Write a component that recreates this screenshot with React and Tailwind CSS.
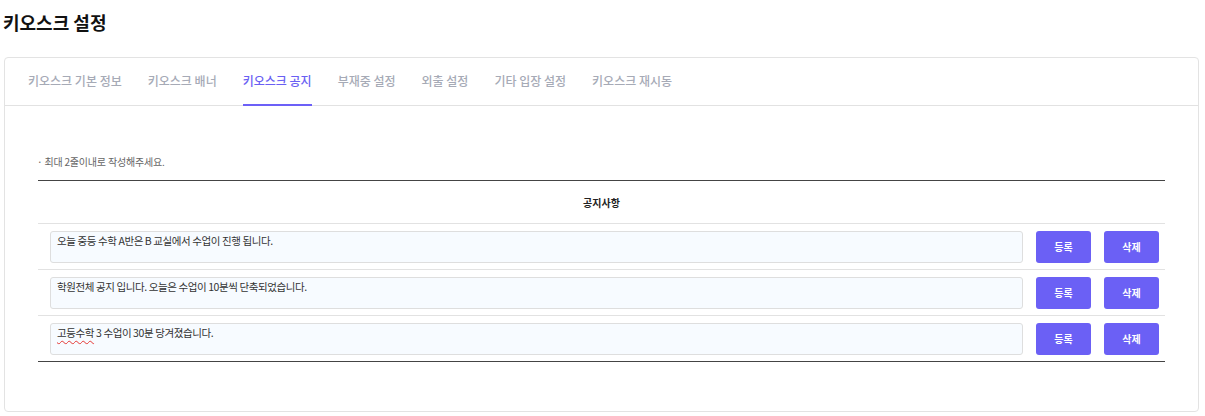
import React from "react";

const tabs = ["키오스크 기본 정보", "키오스크 배너", "키오스크 공지", "부재중 설정", "외출 설정", "기타 입장 설정", "키오스크 재시동"];

const notices = [
  { text: "오늘 중등 수학 A반은 B 교실에서 수업이 진행 됩니다." },
  { text: "학원전체 공지 입니다. 오늘은 수업이 10분씩 단축되었습니다." },
  { text: null },
];

export default function App() {
  return (
    <div className="w-[1205px] h-[416px] bg-white text-[#222]" style={{ fontFamily: '"Noto Sans CJK KR", "Noto Sans", sans-serif' }}>
      <h1 className="pl-[3px] pt-[9px] h-[57px] text-[18px] font-bold leading-[26px] tracking-[0px] text-[#111]">키오스크 설정</h1>
      <div className="ml-[4px] w-[1195px] h-[355px] border border-[#e3e3e3] rounded-[4px] flex flex-col">
        <div className="h-[48px] border-b border-[#e2e2e2] flex items-stretch pl-[23px] gap-[26px]">
          {tabs.map((t, i) => (
            <div
              key={t}
              className={
                "flex items-center text-[12px] font-medium tracking-[0px] border-b-2 -mb-px " +
                (i === 2 ? "text-[#6a5ff3] border-[#6c60f7]" : "text-[#a6aab6] border-transparent")
              }
            >
              {t}
            </div>
          ))}
        </div>
        <div className="px-[33px] pt-[49px]">
          <p className="text-[10px] text-[#666] leading-[14px] tracking-[-0.2px] -ml-px">· 최대 2줄이내로 작성해주세요.</p>
          <div className="mt-[11px] border-t border-b border-[#444]">
            <div className="h-[43px] flex items-center justify-center text-[10px] font-bold text-[#222] border-b border-[#e2e2e2]">공지사항</div>
            {notices.map((n, i) => (
              <div key={i} className={"flex items-center pl-[12px] pr-[6px] gap-[13px] " + (i < 2 ? "h-[46px] border-b border-[#e2e2e2]" : "h-[45px]")}>
                <div className="flex-1 h-[32px] bg-[#f7fbff] border border-[#dedede] rounded-[3px] px-[6px] pt-[1px] text-[10.5px] leading-[15px] text-[#333] tracking-[-0.4px]">
                  {n.text !== null ? (
                    n.text
                  ) : (
                    <>
                      <span className="underline decoration-wavy decoration-[#e53935] decoration-[1px] underline-offset-[3px]">고등수학</span> 3 수업이 30분 당겨졌습니다.
                    </>
                  )}
                </div>
                <button className="w-[55px] h-[32px] rounded-[3px] bg-[#6b60f5] text-white text-[10px] font-bold">등록</button>
                <button className="w-[55px] h-[32px] rounded-[3px] bg-[#6b60f5] text-white text-[10px] font-bold">삭제</button>
              </div>
            ))}
          </div>
        </div>
      </div>
    </div>
  );
}
